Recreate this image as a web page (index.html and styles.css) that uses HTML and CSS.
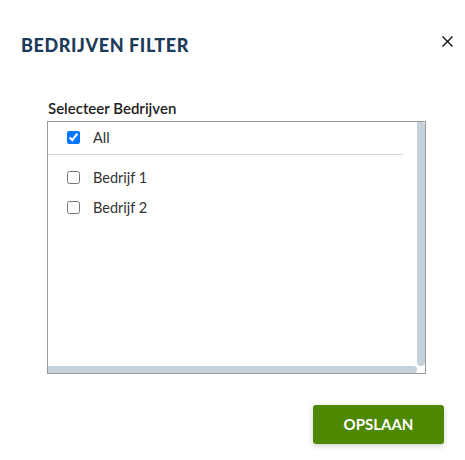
FILE: index.html
```html
<!DOCTYPE html>
<html lang="nl">
<head>
<meta charset="utf-8">
<title>Bedrijven filter</title>
<link rel="stylesheet" href="styles.css">
</head>
<body>
<div class="dialog">
  <div class="header">
    <h1 class="title">BEDRIJVEN FILTER</h1>
    <button class="close" aria-label="Sluiten">
      <svg width="11" height="11" viewBox="0 0 11 11"><path d="M0.5 0.5L10.5 10.5M10.5 0.5L0.5 10.5" stroke="#111" stroke-width="1.4" fill="none"/></svg>
    </button>
  </div>
  <div class="body">
    <div class="label">Selecteer Bedrijven</div>
    <div class="listbox">
      <div class="list">
        <label class="row row-all"><input type="checkbox" checked><span>All</span></label>
        <div class="sep"></div>
        <div class="items">
          <label class="row"><input type="checkbox"><span>Bedrijf 1</span></label>
          <label class="row"><input type="checkbox"><span>Bedrijf 2</span></label>
        </div>
      </div>
      <div class="vbar"></div>
      <div class="hbar"></div>
      <div class="corner"></div>
    </div>
  </div>
  <div class="footer">
    <button class="save">OPSLAAN</button>
  </div>
</div>
</body>
</html>
```

FILE: styles.css
```css
html, body {
  margin: 0;
  padding: 0;
  background: #fff;
}
body {
  font-family: Lato, "Noto Sans", sans-serif;
  line-height: 1.2;
  color: #333;
}
.dialog {
  width: 465px;
  height: 460px;
}
.header {
  display: flex;
  justify-content: space-between;
  align-items: flex-start;
  padding: 35px 12px 0 21px;
}
.title {
  margin: 0;
  font-size: 18px;
  font-weight: 900;
  letter-spacing: 0.6px;
  color: #1c3a59;
  line-height: 1.2;
}
.close {
  margin-top: 1px;
  padding: 0;
  border: 0;
  background: transparent;
  width: 11px;
  height: 11px;
  display: flex;
}
.body {
  padding: 42px 0 0 47px;
}
.label {
  font-size: 15px;
  font-weight: 600;
  color: #222;
  padding-left: 1px;
  margin-bottom: 4px;
  line-height: 18px;
}
.listbox {
  box-sizing: border-box;
  width: 379px;
  height: 253px;
  border: 1px solid #9a9a9a;
  display: grid;
  grid-template-columns: 1fr 8px;
  grid-template-rows: 1fr 7px;
}
.list {
  overflow: hidden;
}
.vbar {
  background: #c6d1de;
  border-radius: 0 3px 4px 4px;
}
.hbar {
  background: #c6d1de;
  border-radius: 0 4px 4px 0;
}
.corner {
  background: #fff;
}
.row {
  display: flex;
  align-items: center;
  height: 30px;
  padding-left: 19px;
  font-size: 14.5px;
  color: #333;
}
.row-all {
  height: 32px;
}
.row input {
  margin: 0 13px 0 0;
  width: 13px;
  height: 13px;
}
.sep {
  height: 1px;
  background: #d4d4d4;
  margin-right: 14px;
}
.items {
  padding-top: 8px;
}
.footer {
  display: flex;
  justify-content: flex-end;
  padding: 31px 21px 0 0;
}
.save {
  width: 131px;
  height: 39px;
  border: 0;
  border-radius: 3px;
  background: #4e8700;
  color: #fff;
  font-family: Lato, "Noto Sans", sans-serif;
  font-size: 15px;
  font-weight: 700;
  box-shadow: 0 2px 6px rgba(0,0,0,0.18);
}
```
